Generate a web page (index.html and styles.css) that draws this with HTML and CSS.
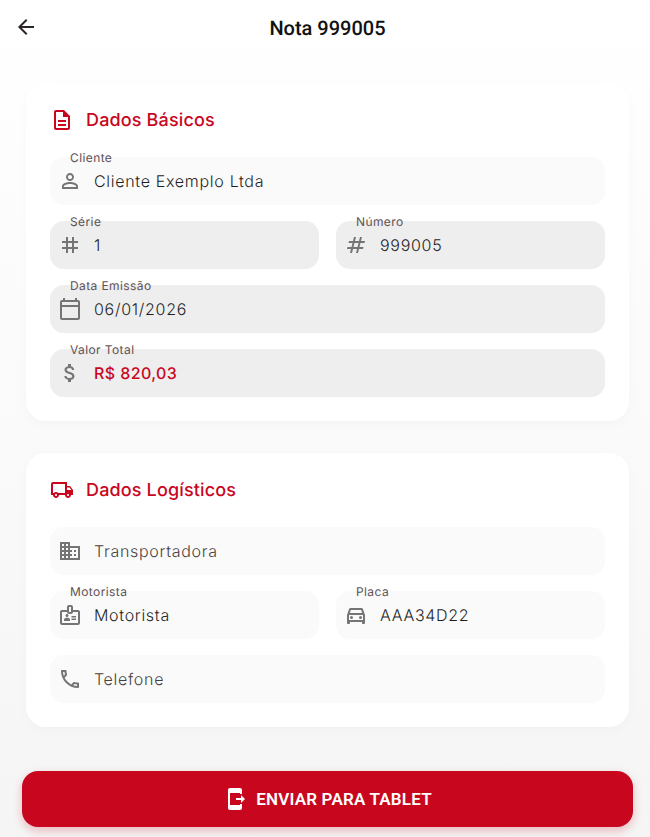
FILE: index.html
```html
<!DOCTYPE html>
<html lang="pt-BR">
<head>
    <meta charset="UTF-8">
    <title>Nota 999005</title>
    <link rel="stylesheet" href="styles.css">
</head>
<body>
<div class="page">
    <header class="topbar">
        <svg class="back" viewBox="0 0 24 24"><path d="M20 11H7.83l5.59-5.59L12 4l-8 8 8 8 1.41-1.41L7.83 13H20v-2z"/></svg>
        <h1>Nota 999005</h1>
    </header>

    <main class="content">
        <section class="card first">
            <h2>
                <svg viewBox="0 0 24 24"><path d="M8 16h8v2H8zm0-4h8v2H8zm6-10H6c-1.1 0-2 .9-2 2v16c0 1.1.89 2 1.99 2H18c1.1 0 2-.9 2-2V8l-6-6zm4 18H6V4h7v5h5v11z"/></svg>
                <span>Dados Básicos</span>
            </h2>
            <div class="field">
                <label>Cliente</label>
                <svg viewBox="0 0 24 24"><path d="M12 5.9c1.16 0 2.1.94 2.1 2.1s-.94 2.1-2.1 2.1S9.9 9.16 9.9 8s.94-2.1 2.1-2.1m0 9c2.97 0 6.1 1.46 6.1 2.1v1.1H5.9V17c0-.64 3.13-2.1 6.1-2.1M12 4C9.79 4 8 5.79 8 8s1.79 4 4 4 4-1.79 4-4-1.79-4-4-4zm0 9c-2.67 0-8 1.34-8 4v3h16v-3c0-2.66-5.33-4-8-4z"/></svg>
                <span>Cliente Exemplo Ltda</span>
            </div>
            <div class="row">
                <div class="field locked">
                    <label>Série</label>
                    <svg viewBox="0 0 24 24"><path d="M20 10V8h-4V4h-2v4h-4V4H8v4H4v2h4v4H4v2h4v4h2v-4h4v4h2v-4h4v-2h-4v-4h4zm-6 4h-4v-4h4v4z"/></svg>
                    <span>1</span>
                </div>
                <div class="field locked">
                    <label>Número</label>
                    <svg viewBox="0 0 24 24"><path d="M20.5 10l.5-2h-4l1-4h-2l-1 4h-4l1-4h-2L9 8H5l-.5 2h4l-1 4h-4L3 16h4l-1 4h2l1-4h4l-1 4h2l1-4h4l.5-2h-4l1-4h4zm-7 4h-4l1-4h4l-1 4z"/></svg>
                    <span>999005</span>
                </div>
            </div>
            <div class="field locked">
                <label>Data Emissão</label>
                <svg viewBox="0 0 24 24"><path d="M20 3h-1V1h-2v2H7V1H5v2H4c-1.1 0-2 .9-2 2v16c0 1.1.9 2 2 2h16c1.1 0 2-.9 2-2V5c0-1.1-.9-2-2-2zm0 2v3H4V5h16zM4 21V10h16v11H4z"/></svg>
                <span>06/01/2026</span>
            </div>
            <div class="field locked">
                <label>Valor Total</label>
                <svg viewBox="0 0 24 24"><path d="M11.8 10.9c-2.27-.59-3-1.2-3-2.15 0-1.09 1.01-1.85 2.7-1.85 1.78 0 2.44.85 2.5 2.1h2.21c-.07-1.72-1.12-3.3-3.21-3.81V3h-3v2.16c-1.94.42-3.5 1.68-3.5 3.61 0 2.31 1.91 3.46 4.7 4.13 2.5.6 3 1.48 3 2.41 0 .69-.49 1.79-2.7 1.79-2.06 0-2.87-.92-2.98-2.1h-2.2c.12 2.19 1.76 3.42 3.68 3.83V21h3v-2.15c1.95-.37 3.5-1.5 3.5-3.55 0-2.84-2.43-3.81-4.7-4.4z"/></svg>
                <span class="total">R$ 820,03</span>
            </div>
        </section>

        <section class="card">
            <h2>
                <svg viewBox="0 0 24 24"><path d="M20 8h-3V4H3c-1.1 0-2 .9-2 2v11h2c0 1.66 1.34 3 3 3s3-1.34 3-3h6c0 1.66 1.34 3 3 3s3-1.34 3-3h2v-5l-3-4zm-.5 1.5l1.96 2.5H17V9.5h2.5zM6 18c-.55 0-1-.45-1-1s.45-1 1-1 1 .45 1 1-.45 1-1 1zm2.22-3c-.55-.61-1.33-1-2.22-1s-1.67.39-2.22 1H3V6h12v9H8.22zM18 18c-.55 0-1-.45-1-1s.45-1 1-1 1 .45 1 1-.45 1-1 1z"/></svg>
                <span>Dados Logísticos</span>
            </h2>
            <div class="field">
                <svg viewBox="0 0 24 24"><path d="M12 7V3H2v18h20V7H12zM6 19H4v-2h2v2zm0-4H4v-2h2v2zm0-4H4V9h2v2zm0-4H4V5h2v2zm4 12H8v-2h2v2zm0-4H8v-2h2v2zm0-4H8V9h2v2zm0-4H8V5h2v2zm10 12h-8v-2h2v-2h-2v-2h2v-2h-2V9h8v10zm-2-8h-2v2h2v-2zm0 4h-2v2h2v-2z"/></svg>
                <span class="empty">Transportadora</span>
            </div>
            <div class="row">
                <div class="field">
                    <label>Motorista</label>
                    <svg viewBox="0 0 24 24"><path d="M20 7h-5V4c0-1.1-.9-2-2-2h-2c-1.1 0-2 .9-2 2v3H4c-1.1 0-2 .9-2 2v11c0 1.1.9 2 2 2h16c1.1 0 2-.9 2-2V9c0-1.1-.9-2-2-2zM11 4h2v5h-2V4zm9 16H4V9h5c0 1.1.9 2 2 2h2c1.1 0 2-.9 2-2h5v11zm-11-6c.83 0 1.5-.67 1.5-1.5S9.83 11 9 11s-1.5.67-1.5 1.5S8.17 14 9 14zm2.08 1.18c-.64-.28-1.34-.43-2.08-.43s-1.44.15-2.08.43C6.36 15.42 6 15.97 6 16.58V18h6v-1.42c0-.61-.36-1.16-.92-1.4zM13.5 13H18v1.5h-4.5zm0 2.5H18V17h-4.5z"/></svg>
                    <span>Motorista</span>
                </div>
                <div class="field">
                    <label>Placa</label>
                    <svg viewBox="0 0 24 24"><path d="M18.92 6.01C18.72 5.42 18.16 5 17.5 5h-11c-.66 0-1.21.42-1.42 1.01L3 12v8c0 .55.45 1 1 1h1c.55 0 1-.45 1-1v-1h12v1c0 .55.45 1 1 1h1c.55 0 1-.45 1-1v-8l-2.08-5.99zM6.85 7h10.29l1.08 3.11H5.77L6.85 7zM19 17H5v-5h14v5z"/><circle cx="7.5" cy="14.5" r="1.5"/><circle cx="16.5" cy="14.5" r="1.5"/></svg>
                    <span>AAA34D22</span>
                </div>
            </div>
            <div class="field">
                <svg viewBox="0 0 24 24"><path d="M6.54 5c.06.89.21 1.76.45 2.59l-1.2 1.2c-.41-1.2-.67-2.47-.76-3.79h1.51m9.86 12.02c.85.24 1.72.39 2.6.45v1.49c-1.32-.09-2.59-.35-3.8-.75l1.2-1.19M7.5 3H4c-.55 0-1 .45-1 1 0 9.39 7.61 17 17 17 .55 0 1-.45 1-1v-3.49c0-.55-.45-1-1-1-1.24 0-2.45-.2-3.57-.57-.1-.04-.21-.05-.31-.05-.26 0-.51.1-.71.29l-2.2 2.2c-2.83-1.45-5.15-3.76-6.59-6.59l2.2-2.2c.28-.28.36-.67.25-1.02C8.7 6.45 8.5 5.25 8.5 4c0-.55-.45-1-1-1z"/></svg>
                <span class="empty">Telefone</span>
            </div>
        </section>
    </main>

    <button class="send">
        <svg viewBox="0 0 24 24"><path d="M17 17h2v4c0 1.1-.9 2-2 2H7c-1.1 0-2-.9-2-2V3c0-1.1.9-1.99 2-1.99L17 1c1.1 0 2 .9 2 2v4h-2V6H7v12h10v-1zm5-5l-4-4v3h-5v2h5v3l4-4z"/></svg>
        <span>ENVIAR PARA TABLET</span>
    </button>
</div>
</body>
</html>
```

FILE: styles.css
```css
* {
    margin: 0;
    padding: 0;
    box-sizing: border-box;
}
body {
    font-family: Inter, "Liberation Sans", sans-serif;
    text-rendering: geometricPrecision;
    overflow: hidden;
}
.page {
    width: 650px;
    height: 837px;
    display: flex;
    flex-direction: column;
    background: linear-gradient(#ffffff, #f5f5f5);
}
.topbar {
    height: 56px;
    padding-left: 5px;
    display: flex;
    align-items: center;
    justify-content: center;
    position: relative;
}
.topbar h1 {
    font-family: Roboto, sans-serif;
    font-size: 20px;
    font-weight: 500;
    color: #111;
}
.back {
    position: absolute;
    left: 14px;
    top: 15px;
    width: 24px;
    height: 24px;
    fill: #2b2326;
}
.content {
    padding: 27px 21px 0 26px;
    display: flex;
    flex-direction: column;
    gap: 32px;
}
.card {
    background: #fff;
    border-radius: 20px;
    padding: 24px;
    display: flex;
    flex-direction: column;
    gap: 16px;
    box-shadow: 0 4px 12px rgba(0, 0, 0, 0.025);
}
.card h2 {
    height: 26px;
    margin-bottom: 8px;
    display: flex;
    align-items: center;
    gap: 12px;
    font-size: 18px;
    font-weight: 500;
    letter-spacing: 0.15px;
    color: #c8071f;
}
.card h2 svg {
    width: 24px;
    height: 24px;
    fill: #c8071f;
}
.row {
    display: flex;
    gap: 17px;
}
.row .field {
    flex: 1;
}
.field {
    height: 48px;
    background: #fafafa;
    border-radius: 14px;
    padding: 0 12px 0 8px;
    display: flex;
    align-items: center;
    gap: 12px;
    position: relative;
    font-size: 16px;
    font-weight: 350;
    letter-spacing: 0.7px;
    color: #1f1f1f;
}
.field.locked {
    background: #eeeeee;
}
.field svg {
    width: 24px;
    height: 24px;
    fill: #757575;
    flex: none;
}
.field label {
    position: absolute;
    left: 20px;
    top: -6px;
    font-size: 12px;
    font-weight: 400;
    line-height: 14px;
    letter-spacing: 0.4px;
    color: #5f5254;
}
.field .empty {
    color: #4a3f41;
}
.field .total {
    color: #c8071f;
    font-weight: 500;
    letter-spacing: 0.4px;
}
.send {
    height: 56px;
    margin: 44px 17px 0 22px;
    background: #c8071f;
    border: none;
    border-radius: 16px;
    display: flex;
    align-items: center;
    justify-content: center;
    gap: 9px;
    font-family: Roboto, sans-serif;
    font-size: 17px;
    font-weight: 600;
    letter-spacing: 0.2px;
    color: #fff;
    box-shadow: 0 4px 10px rgba(200, 7, 31, 0.25);
}
.send svg {
    width: 24px;
    height: 24px;
    fill: #fff;
}
```
